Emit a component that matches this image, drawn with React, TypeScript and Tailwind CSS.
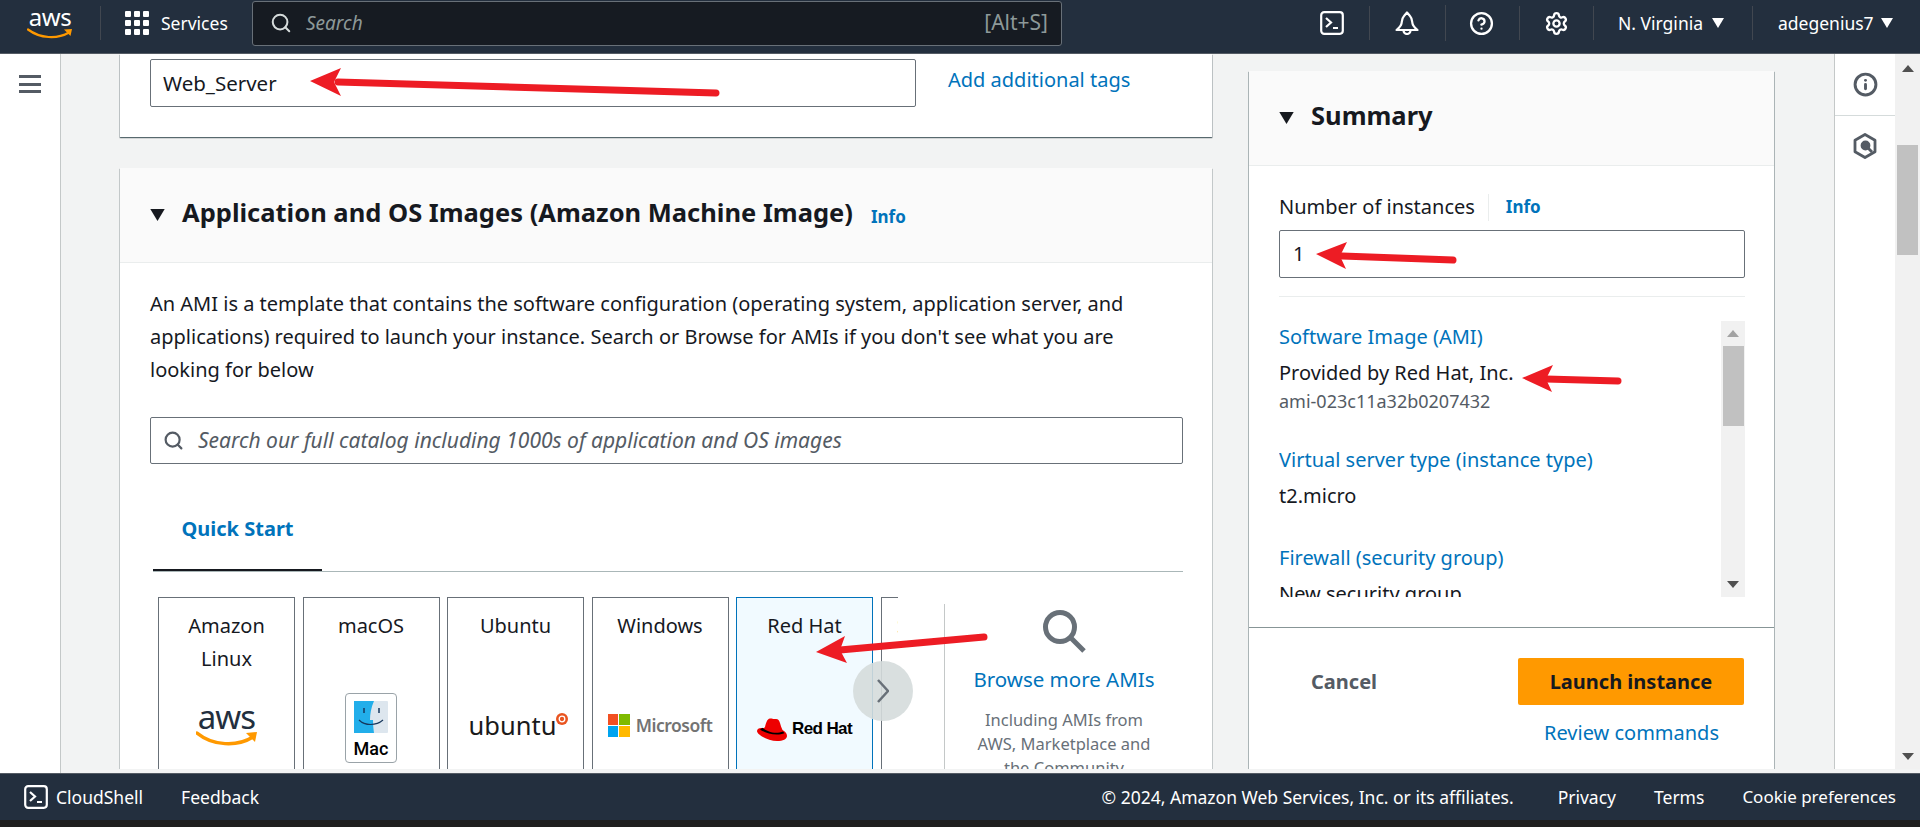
import { Search, CircleHelp, Settings, Info } from "lucide-react";

function Caret({ className }: { className: string }) {
  return (
    <svg viewBox="0 0 12 10" className={className} fill="currentColor">
      <polygon points="0,0 12,0 6,10" />
    </svg>
  );
}

function TerminalIcon({ className }: { className: string }) {
  return (
    <svg viewBox="0 0 24 24" className={className} fill="none" stroke="currentColor" strokeWidth="2.2">
      <rect x="1.2" y="1.2" width="21.6" height="21.6" rx="3" />
      <path d="M6 7l5 4.5L6 16M13 17h5" />
    </svg>
  );
}

function BellIcon({ className }: { className: string }) {
  return (
    <svg viewBox="0 0 24 24" className={className} fill="none" stroke="currentColor" strokeWidth="2.2" strokeLinejoin="round">
      <path d="M12 1.500l3 3.500c2 2 2 5 2.500 7.500.4 2 2 4 5 6.500H1.500c3-2.500 4.600-4.500 5-6.500.5-2.500.5-5.500 2.500-7.500z" />
      <path d="M8.500 19.500a3.500 3.500 0 0 0 7 0" />
    </svg>
  );
}

function AwsLogo({ dark }: { dark?: boolean }) {
  if (dark) {
    return (
      <div className="flex w-[62px] flex-col items-center">
        <span className="text-[33px] leading-[26px] tracking-[-1px] text-[#232f3e]">aws</span>
        <svg viewBox="0 0 62 16" className="mt-[1px] h-[16px] w-[62px]" fill="none">
          <path d="M1 2c16 13 40 14 56 4" stroke="#ff9900" strokeWidth="3.500" strokeLinecap="round" />
          <path d="M50 2l11-1-2 10z" fill="#ff9900" />
        </svg>
      </div>
    );
  }
  return (
    <div className="flex w-[46px] flex-col items-center">
      <span className="text-[24px] leading-[20px] tracking-[-0.5px] text-white">aws</span>
      <svg viewBox="0 0 46 11" className="mt-[1px] h-[11px] w-[46px]" fill="none">
        <path d="M1 1.500c12 9 29 10 41 3" stroke="#ff9900" strokeWidth="2.200" strokeLinecap="round" />
        <path d="M37 1.500l8-.5-1.500 7z" fill="#ff9900" />
      </svg>
    </div>
  );
}

function MacLogo() {
  return (
    <div className="flex h-[70px] w-[52px] flex-col items-center rounded-[4px] border border-[#9aa3a8] pt-[7px]">
      <svg viewBox="0 0 34 32" className="h-[32px] w-[34px]">
        <rect width="34" height="32" rx="1" fill="#dde6ee" />
        <path d="M0 0h20c-3 7-4 13-4 19h3c0 5 .5 9 1 13H0z" fill="#22aeea" />
        <path d="M10 7v5M25 7v5" stroke="#16365c" strokeWidth="1.500" />
        <path d="M5 19c6 6 17 6 24 0" stroke="#16365c" strokeWidth="1.200" fill="none" />
      </svg>
      <span className="mt-[4px] font-['Roboto',sans-serif] text-[18px] leading-[24px] font-medium text-black">Mac</span>
    </div>
  );
}

function UbuntuLogo() {
  return (
    <div className="ml-[6px] flex items-start">
      <span className="text-[25.500px] leading-[26px] text-[#1a1a1a]">ubuntu</span>
      <svg viewBox="0 0 12 12" className="mt-[1px] h-[12px] w-[12px]">
        <circle cx="6" cy="6" r="6" fill="#e95420" />
        <circle cx="6" cy="6" r="2.800" fill="none" stroke="#fff" strokeWidth="1.300" />
      </svg>
    </div>
  );
}

function MicrosoftLogo() {
  return (
    <div className="flex items-center gap-[6px]">
      <div className="grid h-[23px] w-[22px] grid-cols-2 gap-[1px]">
        <div className="bg-[#f25022]" />
        <div className="bg-[#7fba00]" />
        <div className="bg-[#00a4ef]" />
        <div className="bg-[#ffb900]" />
      </div>
      <span className="text-[17.500px] leading-[24px] font-semibold tracking-[-0.5px] text-[#737373]">Microsoft</span>
    </div>
  );
}

function RedHatLogo() {
  return (
    <div className="mt-[8px] flex items-center gap-[5px]">
      <svg viewBox="0 0 30 23" className="h-[23px] w-[30px]">
        <path d="M8 9c1-4 2-8 5-8.500 2-.5 3 1 5 .5 3-.5 4 1 5 4 .7 2.500 1.500 5 2.500 7C29 14 30 16 30 18c0 3-4 5-10 5C12 23 0 17 0 13c0-2 2-3 4-3 1.500 0 3 .5 4-1z" fill="#e00" />
        <path d="M5.500 9.800C10 14 19 16.500 26 13.500l1.500 1.800C20 18 9 16 3 11.500z" fill="#000" />
      </svg>
      <span className="font-['Liberation_Sans',sans-serif] text-[17px] leading-[24px] font-bold tracking-[-0.6px] text-black">Red Hat</span>
    </div>
  );
}

function Tile({ lines, selected, children }: { lines: string[]; selected?: boolean; children: React.ReactNode }) {
  return (
    <div
      className={
        "flex h-[190px] w-[137px] shrink-0 flex-col items-center border pt-[11px] text-[20px] leading-[33px] " +
        (selected ? "border-[#0073bb] bg-[#f1faff]" : "border-[#687078] bg-white")
      }
    >
      <div className="h-[67px] text-center whitespace-nowrap">
        {lines.map((l) => (
          <div key={l}>{l}</div>
        ))}
      </div>
      <div className="flex h-[98px] items-center justify-center">{children}</div>
    </div>
  );
}

function PageScrollbar() {
  return (
    <div className="flex h-[715px] w-[25px] shrink-0 flex-col items-center bg-[#f1f1f1]">
      <div className="flex h-[28px] items-center">
        <svg viewBox="0 0 12 7" className="h-[7px] w-[12px] text-[#505050]" fill="currentColor">
          <polygon points="6,0 12,7 0,7" />
        </svg>
      </div>
      <div className="mt-[63px] h-[110px] w-[21px] bg-[#c1c1c1]" />
      <div className="flex-1" />
      <div className="flex h-[26px] items-center">
        <svg viewBox="0 0 12 7" className="h-[7px] w-[12px] text-[#505050]" fill="currentColor">
          <polygon points="0,0 12,0 6,7" />
        </svg>
      </div>
    </div>
  );
}

const arrows = [
  { tail: "716,93", line: "338,82", head: "310,81 341,68 334,82 341,96" },
  { tail: "1453,260", line: "1342,256", head: "1316,254 1347,242 1340,256 1346,269" },
  { tail: "1618,381", line: "1546,379", head: "1522,378 1553,365 1546,379 1552,392" },
  { tail: "984,637", line: "840,650", head: "816,652 845,636 840,650 847,663" },
];

export default function App() {
  return (
    <div className="relative flex h-[827px] w-[1920px] flex-col overflow-hidden bg-[#f2f3f3] font-['Noto_Sans',sans-serif] text-[#16191f]">
      {/* top nav */}
      <header className="flex h-[54px] shrink-0 items-center border-b border-[#545b64] bg-[#232f3e] pb-[7px] text-[17.500px] text-white">
        <div className="ml-[27px] w-[73px]">
          <AwsLogo />
        </div>
        <div className="h-[34px] w-px bg-[#414750]" />
        <div className="ml-[24px] grid h-[24px] w-[24px] grid-cols-3 gap-[3px]">
          {Array.from({ length: 9 }).map((_, i) => (
            <div key={i} className="rounded-[1px] bg-white" />
          ))}
        </div>
        <span className="ml-[12px] w-[91px]">Services</span>
        <div className="flex h-[45px] w-[810px] items-center rounded-[3px] border border-[#687078] bg-[#161b22]">
          <Search className="ml-[17px] h-[22px] w-[22px] text-[#d5dbdb]" strokeWidth={2.2} />
          <span className="ml-[14px] text-[19px] text-[#8d9999] italic">Search</span>
          <span className="mr-[13px] ml-auto text-[21px] text-[#8d9999]">[Alt+S]</span>
        </div>
        <TerminalIcon className="ml-[258px] h-[24px] w-[24px]" />
        <div className="ml-[25px] h-[34px] w-px bg-[#414750]" />
        <BellIcon className="ml-[25px] h-[24px] w-[24px]" />
        <div className="ml-[26px] h-[36px] w-px bg-[#414750]" />
        <CircleHelp className="ml-[23px] h-[25px] w-[25px]" strokeWidth={2.2} />
        <div className="ml-[25px] h-[34px] w-px bg-[#414750]" />
        <Settings className="ml-[24px] h-[25px] w-[25px]" strokeWidth={2.2} />
        <div className="ml-[24px] h-[34px] w-px bg-[#414750]" />
        <span className="ml-[24px] w-[94px] whitespace-nowrap">N. Virginia</span>
        <Caret className="h-[10px] w-[12px]" />
        <div className="ml-[28px] h-[34px] w-px bg-[#414750]" />
        <span className="ml-[25px] w-[103px]">adegenius7</span>
        <Caret className="h-[10px] w-[12px]" />
      </header>

      <div className="flex h-[719px] shrink-0">
        {/* side nav */}
        <div className="flex h-[719px] w-[61px] shrink-0 flex-col items-center border-r border-[#c4c8c8] bg-white pt-[21px]">
          <div className="flex h-[18px] w-[22px] flex-col justify-between">
            <div className="h-[3px] bg-[#545b64]" />
            <div className="h-[3px] bg-[#545b64]" />
            <div className="h-[3px] bg-[#545b64]" />
          </div>
        </div>

        {/* left column */}
        <div className="ml-[58px] h-[715px] w-[1094px] shrink-0 overflow-hidden px-[1px]">
          <div className="h-[83px] bg-white pt-[5px] pl-[30px] shadow-[0_1px_1px_0_rgba(0,28,36,0.5),1px_1px_1px_0_rgba(0,28,36,0.15),-1px_1px_1px_0_rgba(0,28,36,0.15)]">
            <div className="flex items-center">
              <div className="flex h-[48px] w-[766px] items-center rounded-[2px] border border-[#687078] bg-white pl-[12px] text-[20.500px]">
                Web_Server
              </div>
              <a className="mb-[6px] ml-[32px] text-[20px] text-[#0073bb]">Add additional tags</a>
            </div>
          </div>

          <div className="mt-[31px] h-[700px] bg-white shadow-[0_1px_1px_0_rgba(0,28,36,0.3),1px_1px_1px_0_rgba(0,28,36,0.15),-1px_1px_1px_0_rgba(0,28,36,0.15)]">
            <div className="flex h-[95px] items-center border-b border-[#eaeded] bg-[#fafafa] pl-[30px]">
              <Caret className="h-[12px] w-[15px]" />
              <h2 className="mb-[6px] ml-[17px] text-[25.500px] font-bold">Application and OS Images (Amazon Machine Image)</h2>
              <a className="mt-[4px] ml-[18px] text-[17px] font-bold text-[#0073bb]">Info</a>
            </div>
            <div className="pt-[24px] pl-[30px]">
              <p className="text-[20px] leading-[33px] whitespace-nowrap">
                An AMI is a template that contains the software configuration (operating system, application server, and
                <br />
                applications) required to launch your instance. Search or Browse for AMIs if you don't see what you are
                <br />
                looking for below
              </p>
              <div className="mt-[31px] flex h-[47px] w-[1033px] items-center rounded-[2px] border border-[#687078] pl-[12px]">
                <Search className="h-[21px] w-[21px] text-[#545b64]" strokeWidth={2.500} />
                <span className="ml-[14px] text-[21px] text-[#545b64] italic">
                  Search our full catalog including 1000s of application and OS images
                </span>
              </div>
              <div className="mt-[42px] ml-[3px] w-[1030px] border-b border-[#aab7b8]">
                <div className="flex h-[65px] w-[169px] items-start justify-center border-b-2 border-[#16191f] pt-[8px] text-[20px] font-bold text-[#0073bb]">
                  Quick Start
                </div>
              </div>
              <div className="relative mt-[25px] ml-[8px] flex">
                <div className="flex h-[190px] w-[740px] shrink-0 gap-[7.500px] overflow-hidden">
                  <Tile lines={["Amazon", "Linux"]}>
                    <AwsLogo dark />
                  </Tile>
                  <Tile lines={["macOS"]}>
                    <div className="mt-[6px]">
                      <MacLogo />
                    </div>
                  </Tile>
                  <Tile lines={["Ubuntu"]}>
                    <UbuntuLogo />
                  </Tile>
                  <Tile lines={["Windows"]}>
                    <MicrosoftLogo />
                  </Tile>
                  <Tile lines={["Red Hat"]} selected>
                    <RedHatLogo />
                  </Tile>
                  <Tile lines={["SUSE Linux"]}>
                    <span />
                  </Tile>
                </div>
                <div className="mt-[7px] ml-[46px] flex h-[190px] w-[239px] shrink-0 flex-col items-center border-l border-[#c4c8c8] pt-[5px]">
                  <svg viewBox="0 0 44 44" className="h-[44px] w-[44px] text-[#687078]" fill="none" stroke="currentColor" strokeWidth="5">
                    <circle cx="18" cy="18" r="14.500" />
                    <path d="M28 28l14 14" />
                  </svg>
                  <a className="mt-[12px] text-[20.500px] leading-[28px] text-[#0073bb]">Browse more AMIs</a>
                  <p className="mt-[15px] text-center text-[16.500px] leading-[24px] text-[#687078]">
                    Including AMIs from
                    <br />
                    AWS, Marketplace and
                    <br />
                    the Community
                  </p>
                </div>
                <div className="absolute top-[64px] left-[695px] flex h-[60px] w-[60px] items-center justify-center rounded-full bg-[#d5dbdb]/90 text-[#687078]">
                  <svg viewBox="0 0 12 24" className="h-[24px] w-[12px]" fill="none" stroke="currentColor" strokeWidth="2.500">
                    <path d="M1 1l10 11L1 23" />
                  </svg>
                </div>
              </div>
            </div>
          </div>
        </div>

        {/* summary */}
        <div className="ml-[35px] h-[715px] w-[527px] shrink-0 overflow-hidden px-[1px] pt-[17px]">
          <div className="h-[720px] bg-white shadow-[0_1px_1px_0_rgba(0,28,36,0.3),1px_1px_1px_0_rgba(0,28,36,0.25),-1px_1px_1px_0_rgba(0,28,36,0.25)]">
            <div className="flex h-[95px] items-center border-b border-[#eaeded] bg-[#fafafa] pl-[30px]">
              <Caret className="h-[12px] w-[15px]" />
              <h2 className="mb-[6px] ml-[17px] text-[25.500px] font-bold">Summary</h2>
            </div>
            <div className="px-[30px] pt-[27px]">
              <div className="flex h-[28px] items-center">
                <span className="text-[20px]">Number of instances</span>
                <div className="ml-[13px] h-[27px] w-px bg-[#eaeded]" />
                <a className="ml-[17px] text-[17px] font-bold text-[#0073bb]">Info</a>
              </div>
              <div className="mt-[9px] flex h-[48px] w-[466px] items-center rounded-[2px] border border-[#687078] pl-[13px] text-[20px]">
                1
              </div>
              <div className="mt-[18px] w-[466px] border-t border-[#eaeded]" />
              <div className="mt-[24px] flex h-[276px] w-[466px] overflow-hidden">
                <div className="h-[276px] w-[442px] pt-[2px] text-[20px] leading-[28px]">
                  <a className="block text-[#0073bb]">Software Image (AMI)</a>
                  <div className="mt-[8px]">Provided by Red Hat, Inc.</div>
                  <div className="mt-[1px] text-[18px] leading-[26px] text-[#545b64]">ami-023c11a32b0207432</div>
                  <a className="mt-[32px] block text-[#0073bb]">Virtual server type (instance type)</a>
                  <div className="mt-[8px]">t2.micro</div>
                  <a className="mt-[34px] block text-[#0073bb]">Firewall (security group)</a>
                  <div className="mt-[8px]">New security group</div>
                </div>
                <div className="flex h-[276px] w-[24px] flex-col items-center bg-[#f1f1f1]">
                  <div className="flex h-[25px] items-center">
                    <svg viewBox="0 0 12 7" className="h-[7px] w-[12px] text-[#a3a3a3]" fill="currentColor">
                      <polygon points="6,0 12,7 0,7" />
                    </svg>
                  </div>
                  <div className="h-[80px] w-[21px] bg-[#c1c1c1]" />
                  <div className="flex-1" />
                  <div className="flex h-[26px] items-center">
                    <svg viewBox="0 0 12 7" className="h-[7px] w-[12px] text-[#505050]" fill="currentColor">
                      <polygon points="0,0 12,0 6,7" />
                    </svg>
                  </div>
                </div>
              </div>
            </div>
            <div className="mt-[30px] border-t border-[#879596] pt-[30px] pr-[30px] pl-[62px]">
              <div className="flex items-center justify-between">
                <span className="text-[20px] font-bold text-[#545b64]">Cancel</span>
                <button className="h-[47px] w-[226px] rounded-[2px] bg-[#ff9900] text-[20px] font-bold">Launch instance</button>
              </div>
              <div className="mt-[13px] text-right">
                <a className="mr-[25px] text-[20px] text-[#0073bb]">Review commands</a>
              </div>
            </div>
          </div>
        </div>

        {/* right rail */}
        <div className="ml-[59px] flex h-[715px] w-[61px] shrink-0 flex-col border-l border-[#c4c8c8] bg-white">
          <div className="flex h-[62px] items-center justify-center border-b border-[#d5dbdb]">
            <Info className="h-[25px] w-[25px] text-[#545b64]" strokeWidth={2.800} />
          </div>
          <div className="flex h-[60px] items-center justify-center">
            <svg viewBox="0 0 24 26" className="h-[26px] w-[24px] text-[#545b64]" fill="none" stroke="currentColor" strokeWidth="2.800" strokeLinejoin="round">
              <path d="M12 1.500l10 5.700v11.600l-10 5.700-10-5.700V7.200z" />
              <circle cx="12.500" cy="12.500" r="3.500" fill="currentColor" />
              <path d="M15 15l4 4" />
            </svg>
          </div>
        </div>
        <PageScrollbar />
      </div>

      {/* footer */}
      <footer className="flex h-[47px] shrink-0 items-center border-t border-[#545b64] bg-[#232f3e] text-[17.500px] text-white">
        <TerminalIcon className="ml-[24px] h-[24px] w-[24px]" />
        <span className="ml-[8px]">CloudShell</span>
        <span className="ml-[38px]">Feedback</span>
        <span className="ml-auto">© 2024, Amazon Web Services, Inc. or its affiliates.</span>
        <span className="ml-[44px]">Privacy</span>
        <span className="ml-[38px]">Terms</span>
        <span className="mr-[24px] ml-[38px] text-[17px]">Cookie preferences</span>
      </footer>
      <div className="h-[7px] shrink-0 bg-[#1f1f1f]" />

      {/* red annotation arrows */}
      <svg viewBox="0 0 1920 827" className="pointer-events-none absolute top-0 left-0 h-[827px] w-[1920px]">
        {arrows.map((a) => (
          <g key={a.tail}>
            <polyline points={a.tail + " " + a.line} stroke="#ed1c24" strokeWidth="7" strokeLinecap="round" fill="none" />
            <polygon points={a.head} fill="#ed1c24" />
          </g>
        ))}
      </svg>
    </div>
  );
}
